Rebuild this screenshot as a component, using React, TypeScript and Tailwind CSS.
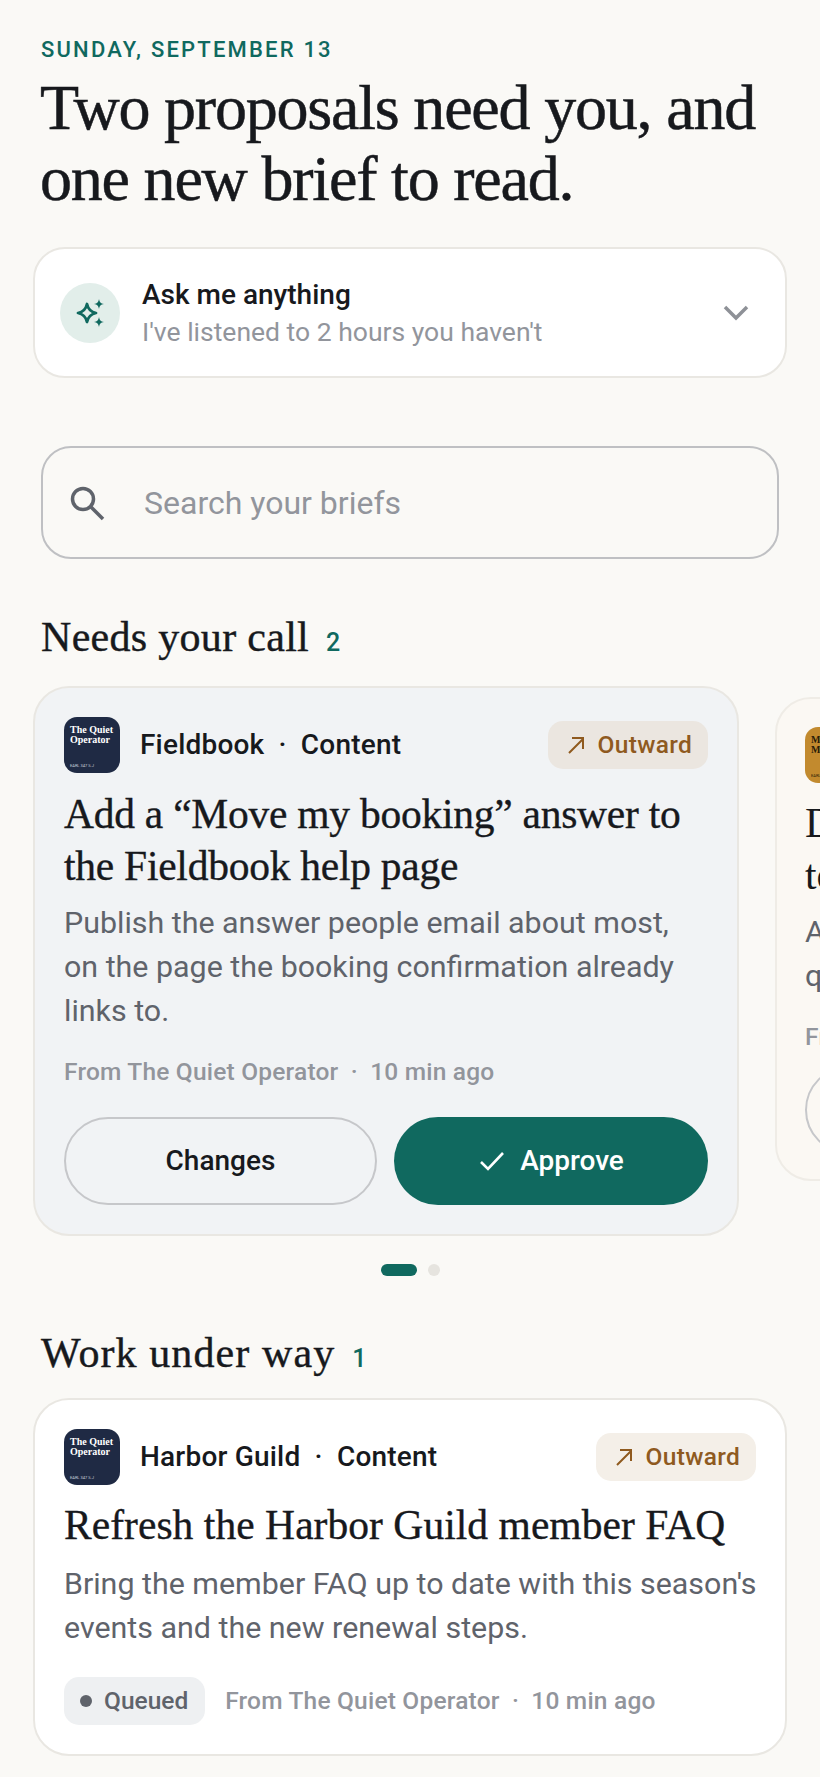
const sans = "font-['Roboto',sans-serif]";
const serif = "font-['Liberation_Serif',serif]";

function Logo({ bg = "bg-[#1f2a44]", dark = false, lines = ["The Quiet", "Operator"] }: { bg?: string; dark?: boolean; lines?: string[] }) {
  return (
    <div className={`w-14 h-14 shrink-0 rounded-[13px] flex flex-col justify-between px-[6px] pt-[8px] pb-[5px] ${bg}`}>
      <div className={`${serif} font-bold text-[10px] leading-[10px] whitespace-nowrap ${dark ? "text-[#2a1d08]" : "text-white"}`}>
        {lines[0]}
        <br />
        {lines[1]}
      </div>
      <div className={`${sans} text-[4px] leading-[5px] whitespace-nowrap ${dark ? "text-[#2a1d08]" : "text-[#c9cedb]"}`}>EARL 347 S.J</div>
    </div>
  );
}

function ArrowUpRight() {
  return (
    <svg width="20" height="20" viewBox="0 0 20 20" fill="none" stroke="#8f5a1f" strokeWidth="2" className="shrink-0">
      <path d="M3 18 17 4M6 3h11v11" />
    </svg>
  );
}

function OutwardTag({ bg }: { bg: string }) {
  return (
    <div className={`h-[48px] rounded-[15px] pl-[18px] pr-[16px] flex items-center gap-[12px] ${bg}`}>
      <ArrowUpRight />
      <span className={`${sans} font-medium text-[24.5px] tracking-[0.3px] text-[#8f5a1f]`}>Outward</span>
    </div>
  );
}

function CardHead({ name, tagBg }: { name: string; tagBg: string }) {
  return (
    <div className="flex items-center justify-between">
      <div className="flex items-center gap-5">
        <Logo />
        <div className={`${sans} font-medium text-[28px] tracking-[0.2px] text-[#17191d] whitespace-nowrap`}>
          {name} <span className="mx-[7px]">·</span> Content
        </div>
      </div>
      <OutwardTag bg={tagBg} />
    </div>
  );
}

function SectionTitle({ title, count, tracking }: { title: string; count: number; tracking: string }) {
  return (
    <div className="px-[41px] flex items-baseline gap-[17px]">
      <h2 className={`${serif} text-[42px] leading-[50px] ${tracking} text-[#17191d] [-webkit-text-stroke:0.4px_#17191d]`}>{title}</h2>
      <span className={`${sans} font-medium text-[25px] text-[#10695f]`}>{count}</span>
    </div>
  );
}

function Meta() {
  return (
    <span className={`${sans} font-medium text-[24.5px] leading-[30px] tracking-[0.2px] text-[#92959c] whitespace-nowrap`}>
      From The Quiet Operator <span className="mx-[6px]">·</span> 10 min ago
    </span>
  );
}

export default function App() {
  return (
    <div className={`w-[820px] h-[1777px] overflow-hidden bg-[#faf9f6] ${sans}`}>
      <div className="pt-[36px] px-[40px]">
        <div className="ml-[1px] text-[22px] leading-[28px] font-medium tracking-[2.2px] text-[#10695f] whitespace-nowrap">SUNDAY, SEPTEMBER 13</div>
        <h1 className={`${serif} mt-[8px] text-[64px] leading-[71px] tracking-[-1.2px] text-[#17191d] [-webkit-text-stroke:0.5px_#17191d] whitespace-nowrap`}>
          Two proposals need you, and
          <br />
          one new brief to read.
        </h1>
      </div>

      <div className="mx-[33px] mt-[33px] h-[131px] rounded-[32px] bg-white border-2 border-[#e9e7e2] flex items-center pl-[25px] pr-[35px]">
        <div className="w-[60px] h-[60px] rounded-full bg-[#e2eeea] shrink-0">
          <svg width="60" height="60" viewBox="0 0 60 60" fill="none">
            <path d="M27 21c1.100 5.500 3.500 7.900 9 9-5.500 1.100-7.900 3.500-9 9-1.100-5.500-3.500-7.900-9-9 5.500-1.100 7.900-3.500 9-9Z" stroke="#10695f" strokeWidth="2.800" strokeLinejoin="round" />
            <path d="M39 16c.7 3.400 1.600 4.300 5 5-3.400.7-4.300 1.600-5 5-.7-3.400-1.600-4.300-5-5 3.400-.7 4.300-1.600 5-5ZM39 34c.7 3.400 1.600 4.300 5 5-3.400.7-4.300 1.600-5 5-.7-3.400-1.600-4.300-5-5 3.400-.7 4.300-1.600 5-5Z" fill="#10695f" />
          </svg>
        </div>
        <div className="ml-[22px] flex-1 pt-[1px]">
          <div className="text-[28px] leading-[36px] font-medium text-[#17191d]">Ask me anything</div>
          <div className="mt-[1px] text-[26.5px] leading-[36px] text-[#92959c]">I've listened to 2 hours you haven't</div>
        </div>
        <svg width="28" height="18" viewBox="0 0 28 18" fill="none" stroke="#8e9197" strokeWidth="3.500">
          <path d="m3 3 11 11L25 3" />
        </svg>
      </div>

      <div className="mx-[41px] mt-[68px] h-[113px] rounded-[30px] border-2 border-[#bfc0c3] flex items-center pl-[25px]">
        <svg width="38" height="38" viewBox="0 0 38 38" fill="none" stroke="#5f636b" strokeWidth="3.500" className="shrink-0">
          <circle cx="15" cy="15" r="10.500" />
          <path d="m23 23 12 12" />
        </svg>
        <span className="ml-[38px] text-[32px] text-[#92959c]">Search your briefs</span>
      </div>

      <div className="mt-[53px]">
        <SectionTitle title="Needs your call" count={2} tracking="tracking-[0.3px]" />
      </div>

      <div className="mt-[24px] pl-[33px] flex items-start gap-[36px] overflow-hidden">
        <div className="w-[706px] h-[550px] shrink-0 rounded-[36px] bg-[#f1f3f5] border-2 border-[#e9e7e2] px-[29px] pt-[29px]">
          <CardHead name="Fieldbook" tagBg="bg-[#ebe6e0]" />
          <h3 className={`${serif} mt-[15px] text-[41.5px] leading-[52px] tracking-[-0.25px] text-[#17191d] [-webkit-text-stroke:0.35px_#17191d] whitespace-nowrap`}>
            Add a “Move my booking” answer to
            <br />
            the Fieldbook help page
          </h3>
          <p className="mt-[9px] text-[30.4px] leading-[44px] text-[#5f636b] whitespace-nowrap">
            Publish the answer people email about most,
            <br />
            on the page the booking confirmation already
            <br />
            links to.
          </p>
          <div className="mt-[24px]">
            <Meta />
          </div>
          <div className="mt-[30px] flex gap-[17px]">
            <button className="w-[313px] h-[88px] rounded-full border-2 border-[#c6c7ca] text-[28px] font-medium text-[#17191d]">Changes</button>
            <button className="w-[314px] h-[88px] rounded-full bg-[#10695f] text-white text-[28px] font-medium flex items-center justify-center gap-[14px]">
              <svg width="28" height="24" viewBox="0 0 28 24" fill="none" stroke="#fff" strokeWidth="2.600">
                <path d="m3 13 7 7L25 4" />
              </svg>
              Approve
            </button>
          </div>
        </div>

        <div className="mt-[11px] w-[706px] h-[484px] shrink-0 rounded-[36px] bg-[#fbf8f3] border-2 border-[#efece6] px-[28px] pt-[28px]">
          <Logo bg="bg-[#c28a2e]" dark lines={["Margin", "Memo"]} />
          <div className={`${serif} mt-[14px] text-[41.5px] leading-[52px] text-[#17191d] whitespace-nowrap`}>
            Draft
            <br />
            to
          </div>
          <p className="mt-[9px] text-[30.4px] leading-[44px] text-[#5f636b] whitespace-nowrap">
            A
            <br />
            q
          </p>
          <div className="mt-[24px]">
            <Meta />
          </div>
          <div className="mt-[14px] w-[313px] h-[88px] rounded-full border-2 border-[#c6c7ca]" />
        </div>
      </div>

      <div className="mt-[28px] flex justify-center gap-[11px]">
        <div className="w-[36px] h-[12px] rounded-full bg-[#10695f]" />
        <div className="w-[12px] h-[12px] rounded-full bg-[#e6e4df]" />
      </div>

      <div className="mt-[52px]">
        <SectionTitle title="Work under way" count={1} tracking="tracking-[1.1px]" />
      </div>

      <div className="mx-[33px] mt-[20px] h-[358px] rounded-[36px] bg-white border-2 border-[#e9e7e2] px-[29px] pt-[29px]">
        <CardHead name="Harbor Guild" tagBg="bg-[#f4efe8]" />
        <h3 className={`${serif} mt-[14px] text-[41.5px] leading-[52px] tracking-[0.05px] text-[#17191d] [-webkit-text-stroke:0.35px_#17191d] whitespace-nowrap`}>
          Refresh the Harbor Guild member FAQ
        </h3>
        <p className="mt-[11px] text-[30.4px] leading-[44px] text-[#5f636b] whitespace-nowrap">
          Bring the member FAQ up to date with this season's
          <br />
          events and the new renewal steps.
        </p>
        <div className="mt-[27px] flex items-center gap-[20px]">
          <div className="h-[48px] rounded-[15px] bg-[#eef0f2] pl-[16px] pr-[17px] flex items-center gap-[12px]">
            <div className="w-[12px] h-[12px] rounded-full bg-[#5f636b]" />
            <span className="text-[24.5px] font-medium text-[#5f636b]">Queued</span>
          </div>
          <Meta />
        </div>
      </div>
    </div>
  );
}
